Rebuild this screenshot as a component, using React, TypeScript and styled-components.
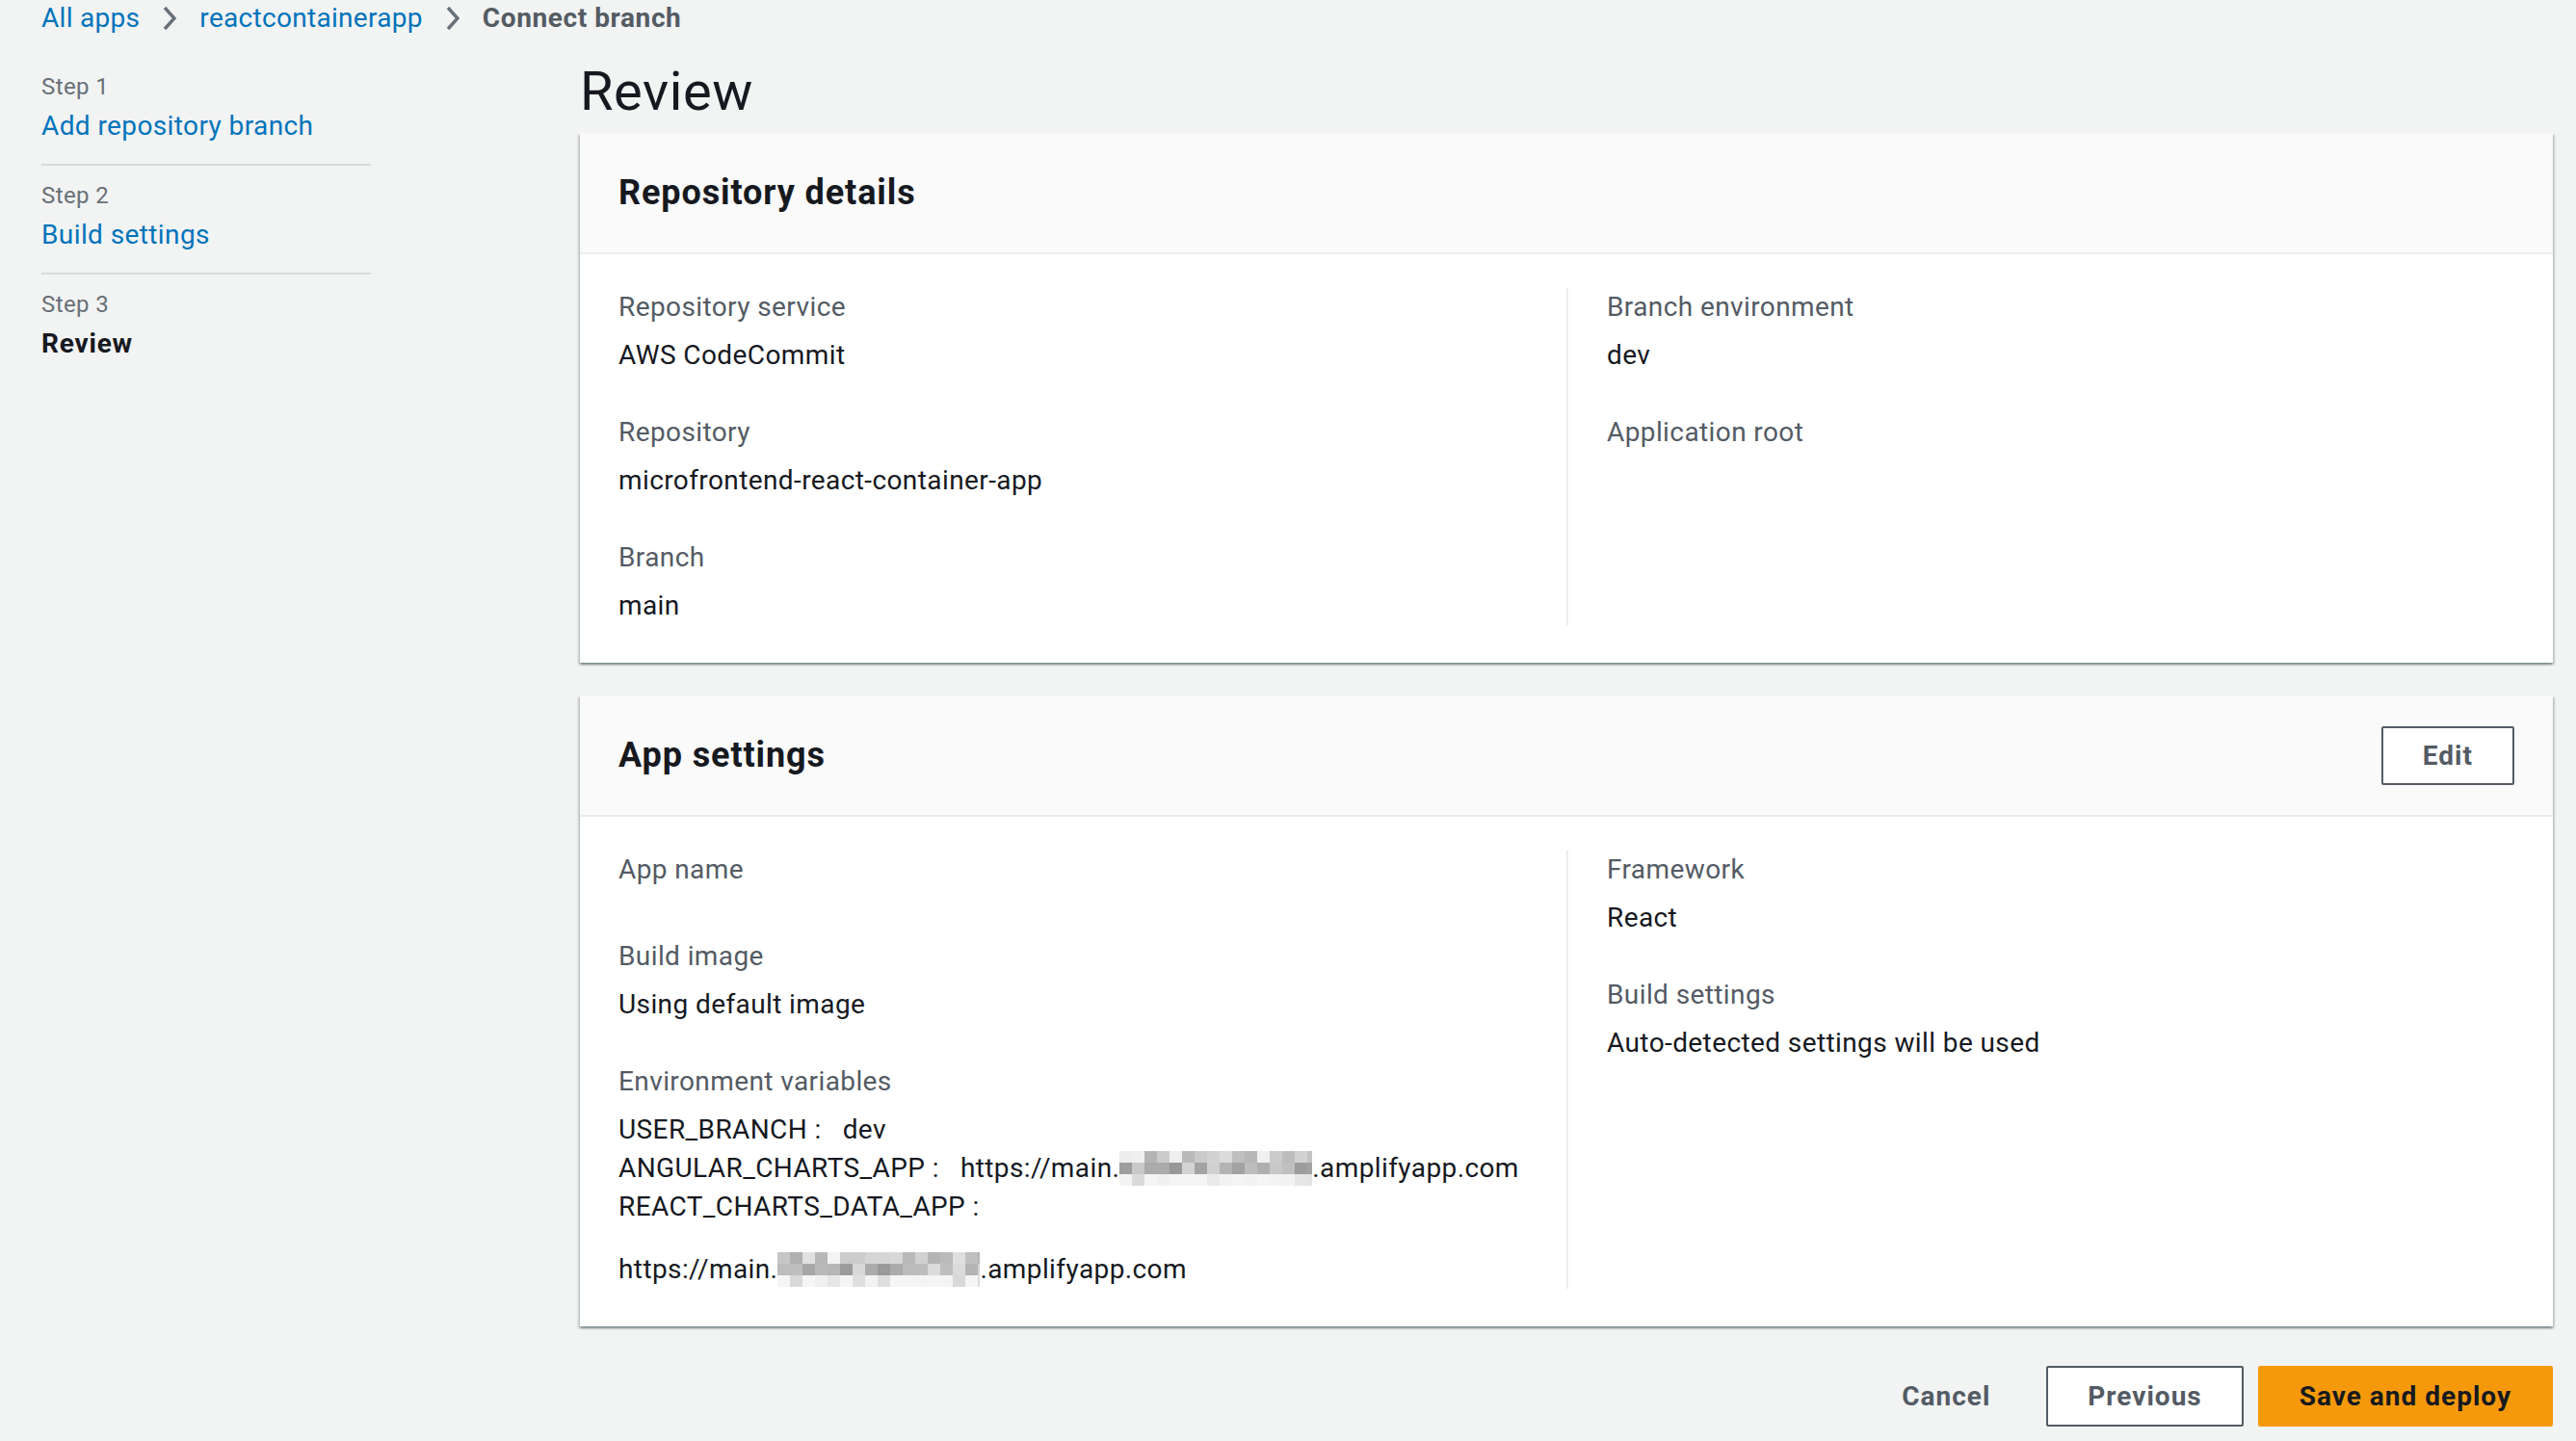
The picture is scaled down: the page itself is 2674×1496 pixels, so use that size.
import React from "react";
import styled, { createGlobalStyle } from "styled-components";

const GlobalStyle = createGlobalStyle`
  html, body { margin: 0; padding: 0; background: #f2f3f3; }
  body {
    font-family: Roboto, "Open Sans", "Liberation Sans", sans-serif;
    color: #16191f;
    letter-spacing: 0.4px;
    -webkit-font-smoothing: antialiased;
  }
  * { box-sizing: border-box; }
`;

const Page = styled.div`
  padding: 0 24px 0 43px;
  min-height: 1496px;
`;

const Breadcrumbs = styled.nav`
  display: flex;
  align-items: center;
  gap: 24px;
  height: 38px;
  font-size: 28px;
  line-height: 38px;
  letter-spacing: 0.3px;
`;

const Crumb = styled.a`
  color: #0073bb;
  text-decoration: none;
`;

const CurrentCrumb = styled.span`
  color: #545b64;
  font-weight: 700;
  letter-spacing: 0.6px;
`;

const ChevronSvg = styled.svg`
  width: 14px;
  height: 26px;
  flex: none;
`;

const Chevron = () => (
  <ChevronSvg viewBox="0 0 14 26">
    <polyline points="2,2 12,13 2,24" fill="none" stroke="#687078" strokeWidth="3.4" />
  </ChevronSvg>
);

const Layout = styled.div`
  display: grid;
  grid-template-columns: 342px 1fr;
  column-gap: 217px;
  padding-top: 21px;
`;

const StepList = styled.ol`
  list-style: none;
  margin: 0;
  padding: 0;
`;

const StepItem = styled.li<{ $last?: boolean }>`
  padding: 15px 0 19px;
  border-bottom: 2px solid ${(p) => (p.$last ? "transparent" : "#d5dbdb")};
`;

const StepLabel = styled.div`
  font-size: 24px;
  line-height: 32px;
  color: #687078;
`;

const StepName = styled.a<{ $active?: boolean }>`
  display: block;
  margin-top: 5px;
  font-size: 28px;
  line-height: 40px;
  text-decoration: none;
  color: ${(p) => (p.$active ? "#16191f" : "#0073bb")};
  font-weight: ${(p) => (p.$active ? 700 : 400)};
  letter-spacing: ${(p) => (p.$active ? "0.8px" : "0.4px")};
`;

const Main = styled.main`
  display: flex;
  flex-direction: column;
`;

const Title = styled.h1`
  margin: 0 0 7px;
  font-size: 56px;
  line-height: 72px;
  font-weight: 400;
  letter-spacing: 0.6px;
  color: #16191f;
`;

const Cards = styled.div`
  display: flex;
  flex-direction: column;
  gap: 34px;
`;

const Card = styled.section`
  background: #fff;
  box-shadow: 0 2px 2px 0 rgba(0, 28, 36, 0.3), 2px 2px 2px 0 rgba(0, 28, 36, 0.15),
    -2px 2px 2px 0 rgba(0, 28, 36, 0.15);
`;

const CardHeader = styled.header`
  display: flex;
  align-items: center;
  justify-content: space-between;
  height: 126px;
  padding: 0 40px;
  background: #fafafa;
  border-bottom: 2px solid #eaeded;
`;

const CardTitle = styled.h2`
  margin: 0;
  font-size: 36px;
  line-height: 44px;
  font-weight: 700;
  letter-spacing: 0.9px;
  color: #16191f;
`;

const CardBody = styled.div`
  display: grid;
  grid-template-columns: 1fr 1fr;
  padding: 35px 40px 39px;
`;

const Column = styled.div<{ $divided?: boolean }>`
  display: flex;
  flex-direction: column;
  gap: 40px;
  padding: ${(p) => (p.$divided ? "0 0 0 40px" : "0 40px 0 0")};
  border-left: ${(p) => (p.$divided ? "2px solid #eaeded" : "none")};
`;

const Field = styled.div`
  display: flex;
  flex-direction: column;
`;

const Label = styled.div`
  font-size: 28px;
  line-height: 40px;
  color: #545b64;
  margin-bottom: 10px;
`;

const Value = styled.div`
  font-size: 28px;
  line-height: 40px;
  color: #16191f;
`;

const EnvLine = styled.div<{ $wrapped?: boolean }>`
  margin-top: ${(p) => (p.$wrapped ? "25px" : "0")};
  white-space: nowrap;
`;

const EnvValue = styled.span`
  margin-left: 22px;
`;

const BlurSvg = styled.svg`
  display: inline-block;
  vertical-align: -9px;
`;

const Redacted = ({ width, seed }: { width: number; seed: number }) => {
  let s = seed;
  const rnd = () => {
    s = (s * 9301 + 49297) % 233280;
    return s / 233280;
  };
  const cell = 13;
  const rows = [0, 12, 24];
  const cols = Math.ceil(width / cell);
  const rects: React.ReactElement[] = [];
  rows.forEach((y, ri) => {
    for (let c = 0; c < cols; c++) {
      const base = ri === 1 ? 150 : ri === 0 ? 175 : 215;
      const v = Math.round(base + rnd() * 70);
      const g = Math.min(245, v);
      rects.push(
        <rect key={`${ri}-${c}`} x={c * cell} y={y} width={cell} height={12} fill={`rgb(${g},${g},${g})`} />
      );
    }
  });
  return (
    <BlurSvg width={width} height={36} viewBox={`0 0 ${width} 36`}>
      {rects}
    </BlurSvg>
  );
};

const Footer = styled.div`
  display: flex;
  justify-content: flex-end;
  gap: 15px;
  margin-top: 41px;
`;

const Button = styled.button<{ $variant?: "link" | "normal" | "primary"; $h?: number }>`
  height: ${(p) => p.$h ?? 63}px;
  padding: 0 41px;
  font-family: inherit;
  font-size: 28px;
  font-weight: 700;
  letter-spacing: 1px;
  border-radius: 2px;
  border: 2px solid
    ${(p) => (p.$variant === "primary" ? "#f5990b" : p.$variant === "link" ? "transparent" : "#545b64")};
  background: ${(p) => (p.$variant === "primary" ? "#f5990b" : p.$variant === "link" ? "transparent" : "#fff")};
  color: ${(p) => (p.$variant === "primary" ? "#16191f" : "#545b64")};
  cursor: pointer;
`;

export default function App() {
  return (
    <>
      <GlobalStyle />
      <Page>
        <Breadcrumbs>
          <Crumb href="#">All apps</Crumb>
          <Chevron />
          <Crumb href="#">reactcontainerapp</Crumb>
          <Chevron />
          <CurrentCrumb>Connect branch</CurrentCrumb>
        </Breadcrumbs>
        <Layout>
          <nav>
            <StepList>
              <StepItem>
                <StepLabel>Step 1</StepLabel>
                <StepName href="#">Add repository branch</StepName>
              </StepItem>
              <StepItem>
                <StepLabel>Step 2</StepLabel>
                <StepName href="#">Build settings</StepName>
              </StepItem>
              <StepItem $last>
                <StepLabel>Step 3</StepLabel>
                <StepName $active>Review</StepName>
              </StepItem>
            </StepList>
          </nav>
          <Main>
            <Title>Review</Title>
            <Cards>
              <Card>
                <CardHeader>
                  <CardTitle>Repository details</CardTitle>
                </CardHeader>
                <CardBody>
                  <Column>
                    <Field>
                      <Label>Repository service</Label>
                      <Value>AWS CodeCommit</Value>
                    </Field>
                    <Field>
                      <Label>Repository</Label>
                      <Value>microfrontend-react-container-app</Value>
                    </Field>
                    <Field>
                      <Label>Branch</Label>
                      <Value>main</Value>
                    </Field>
                  </Column>
                  <Column $divided>
                    <Field>
                      <Label>Branch environment</Label>
                      <Value>dev</Value>
                    </Field>
                    <Field>
                      <Label>Application root</Label>
                      <Value />
                    </Field>
                  </Column>
                </CardBody>
              </Card>
              <Card>
                <CardHeader>
                  <CardTitle>App settings</CardTitle>
                  <Button $variant="normal" $h={61}>Edit</Button>
                </CardHeader>
                <CardBody>
                  <Column>
                    <Field>
                      <Label>App name</Label>
                      <Value />
                    </Field>
                    <Field>
                      <Label>Build image</Label>
                      <Value>Using default image</Value>
                    </Field>
                    <Field>
                      <Label>Environment variables</Label>
                      <Value>
                        <EnvLine>
                          USER_BRANCH :<EnvValue>dev</EnvValue>
                        </EnvLine>
                        <EnvLine>
                          ANGULAR_CHARTS_APP :
                          <EnvValue>
                            https://main.
                            <Redacted width={200} seed={17} />
                            .amplifyapp.com
                          </EnvValue>
                        </EnvLine>
                        <EnvLine>REACT_CHARTS_DATA_APP :</EnvLine>
                        <EnvLine $wrapped>
                          https://main.
                          <Redacted width={210} seed={53} />
                          .amplifyapp.com
                        </EnvLine>
                      </Value>
                    </Field>
                  </Column>
                  <Column $divided>
                    <Field>
                      <Label>Framework</Label>
                      <Value>React</Value>
                    </Field>
                    <Field>
                      <Label>Build settings</Label>
                      <Value>Auto-detected settings will be used</Value>
                    </Field>
                  </Column>
                </CardBody>
              </Card>
            </Cards>
            <Footer>
              <Button $variant="link">Cancel</Button>
              <Button $variant="normal">Previous</Button>
              <Button $variant="primary">Save and deploy</Button>
            </Footer>
          </Main>
        </Layout>
      </Page>
    </>
  );
}
